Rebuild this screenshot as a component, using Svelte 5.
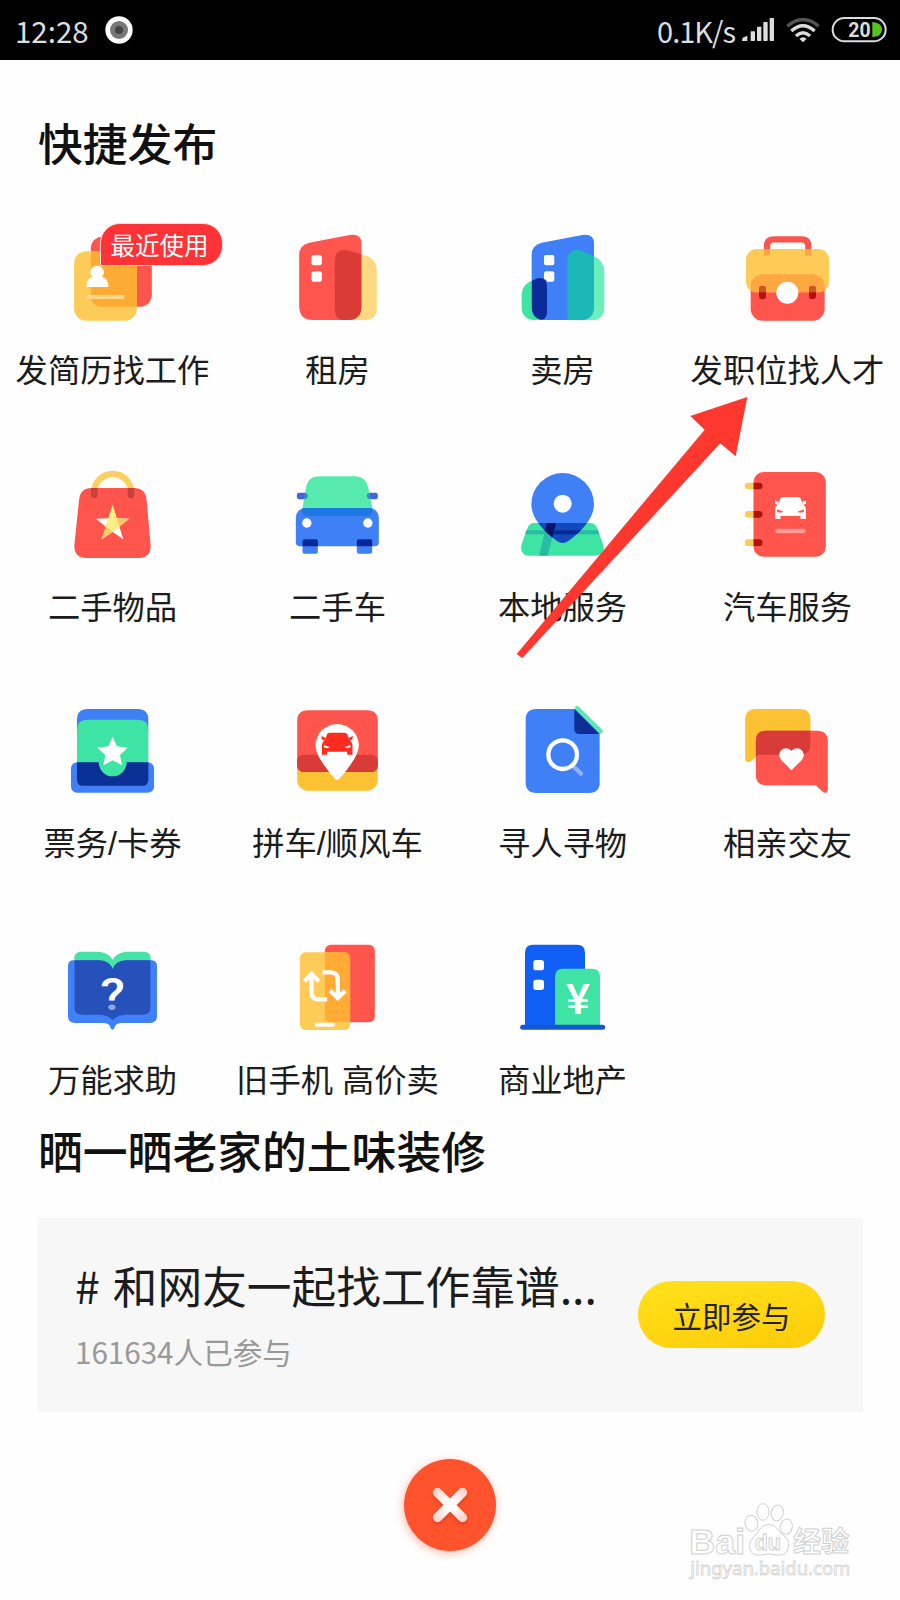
<script>
  // view is the origin of a 300x300 viewBox
  const items = [
    { icon: 'resume', label: '发简历找工作', view: '188.5 45', badge: '最近使用' },
    { icon: 'rent', label: '租房', view: '864.5 45' },
    { icon: 'sell', label: '卖房', view: '189 45' },
    { icon: 'job', label: '发职位找人才', view: '864 45' },
    { icon: 'goods', label: '二手物品', view: '189 35' },
    { icon: 'car', label: '二手车', view: '864.5 35' },
    { icon: 'local', label: '本地服务', view: '189 215' },
    { icon: 'autoService', label: '汽车服务', view: '864.5 215' },
    { icon: 'ticket', label: '票务/卡券', view: '189 25' },
    { icon: 'carpool', label: '拼车/顺风车', view: '864.5 25' },
    { icon: 'search', label: '寻人寻物', view: '189 25' },
    { icon: 'dating', label: '相亲交友', view: '864.5 25' },
    { icon: 'help', label: '万能求助', view: '189 15' },
    { icon: 'phone', label: '旧手机 高价卖', view: '864.5 15' },
    { icon: 'estate', label: '商业地产', view: '189 15' }
  ];

  const rentFront = 'M898 135Q898 105 928 98L1050 75Q1085 70 1085 100V288Q1085 330 1043 330H938Q898 330 898 288Z';
  const rentBack = 'M1005 155Q1005 115 1043 121L1100 137Q1131 148 1131 180V295Q1131 330 1095 330H1035Q1005 330 1005 300Z';
  const sellMain = 'M245 135Q245 105 275 98L397 75Q432 70 432 100V288Q432 330 390 330H285Q245 330 245 288Z';
  const sellRight = 'M352 155Q352 115 390 121L430 137Q463 152 463 185V290Q463 330 425 330H362Q352 330 352 315Z';
  const sellLeft = 'M215 255Q216 230 236 217L262 205Q291 200 291 230V310Q288 328 275 330H255Q215 329 215 290Z';
  const pin = 'M244 342A94 94 0 0 1 432 342Q432 395 355 452Q338 464 321 452Q244 395 244 342Z';
  const chatBack = 'M886 90Q886 58 918 58H1050Q1082 58 1082 90V165Q1082 195 1050 195H925L905 214Q888 222 886 208Z';
  const chatFront = 'M918 155Q918 123 950 123H1102Q1134 123 1134 155V300Q1132 313 1120 308L1098 287H950Q918 287 918 255Z';
  const bookBack = 'M243 65H300Q330 70 338 90Q346 70 376 65H432Q452 65 452 85V232Q452 254 430 254H375Q350 256 338 270Q326 256 300 254H245Q223 254 223 232V85Q223 65 243 65Z';
  const bookFront = 'M204 108Q204 91 221 91H298Q330 93 338 118Q346 93 378 91H453Q471 91 471 108V258Q471 279 450 279H362Q347 280 344 292Q342 299 338 299Q333 299 331 292Q328 280 313 279H225Q204 279 204 258Z';
</script>

{#snippet miniCar(x, y, color, lamp)}
  <g transform="translate({x} {y})" fill={color}>
    <path d="M-30 4Q-27 0 -20 0H20Q27 0 30 4L37 22Q46 28 46 38V66H30V57H-30V66H-46V38Q-46 28 -37 22Z" />
    <path d="M-47 10L-35 15L-38 24L-46 20ZM47 10L35 15L38 24L46 20Z" />
    <path fill={lamp} d="M-40 37L-21 44Q-30 49 -40 44ZM40 37L21 44Q30 49 40 44Z" />
  </g>
{/snippet}

{#snippet art(name)}
  {#if name === 'resume'}
    <rect x="272" y="80" width="183" height="210" rx="35" fill="#ff554f" />
    <rect x="222" y="124" width="188" height="208" rx="36" fill="#fdcb58" />
    <path fill="#feab33" d="M272 124H374Q410 124 410 160V290H307Q272 290 272 255Z" />
    <circle cx="291" cy="187" r="20" fill="#fff" />
    <path fill="#fff" d="M259 231Q260 200 280 200H303Q323 200 325 231Z" />
    <path stroke="#ffd78a" stroke-width="12" stroke-linecap="round" d="M265 261H368" />
  {:else if name === 'rent'}
    <clipPath id="rent-clip"><path d={rentFront} /></clipPath>
    <path fill="#ffd97f" d={rentBack} />
    <path fill="#ff554f" d={rentFront} />
    <path fill="#d93c36" d={rentBack} clip-path="url(#rent-clip)" />
    <rect x="935" y="135" width="31" height="31" rx="6" fill="#fff" />
    <rect x="935" y="184" width="31" height="31" rx="6" fill="#fff" />
  {:else if name === 'sell'}
    <clipPath id="sell-clip"><path d={sellMain} /></clipPath>
    <path fill="#6ceebc" d={sellRight} />
    <path fill="#3ee4a4" d={sellLeft} />
    <path fill="#3f80f8" d={sellMain} />
    <g clip-path="url(#sell-clip)">
      <path fill="#1cb8b8" d={sellRight} />
      <path fill="#0a2c98" d={sellLeft} />
    </g>
    <rect x="282" y="135" width="31" height="31" rx="6" fill="#fff" />
    <path fill="#fff" d="M288 184H307Q313 184 313 190V209Q313 215 307 215H291Q290 209 282 206V190Q282 184 288 184Z" />
  {:else if name === 'job'}
    <clipPath id="job-clip"><rect x="888" y="117" width="249" height="130" rx="32" /></clipPath>
    <path fill="none" stroke="#f9554f" stroke-width="19" d="M951 136V108Q951 88 972 88H1054Q1075 88 1075 108V136" />
    <rect x="902" y="193" width="222" height="139" rx="36" fill="#ff554d" />
    <rect x="888" y="117" width="249" height="130" rx="32" fill="#fecb58" />
    <rect x="902" y="193" width="222" height="139" rx="36" fill="#ffa740" clip-path="url(#job-clip)" />
    <path stroke="#fba747" stroke-width="19" d="M951 117V137M1075 117V137" />
    <rect x="927" y="228" width="21" height="40" rx="10" fill="#b81010" />
    <rect x="1077" y="228" width="21" height="40" rx="10" fill="#b81010" />
    <path fill="#c95a25" d="M927 247V238A10 10 0 0 1 948 238V247ZM1077 247V238A10 10 0 0 1 1098 238V247Z" />
    <circle cx="1012" cy="248" r="33" fill="#fff" />
  {:else if name === 'goods'}
    <path fill="none" stroke="#fbcf60" stroke-width="19" d="M283 130V124A55 53 0 0 1 393 124V130" />
    <path fill="#ff554d" d="M237 150Q240 113 275 113H402Q437 113 440 150L452 285Q453 323 415 323H260Q222 323 223 285Z" />
    <path fill="#c9403d" d="M273 113H293V134A10 10 0 0 1 273 134ZM383 113H403V134A10 10 0 0 1 383 134Z" />
    <path fill="#fff" d="M338 165L350 204L387 205L358 229L370 267L338 245L305 267L317 229L288 205L326 204Z" />
    <path fill="#ffc760" d="M338 165L350 204L387 205L358 229L305 267L317 229Z" />
    <path fill="#ffee85" d="M338 165L358 229L338 243L316 229Z" />
  {:else if name === 'car'}
    <rect x="891" y="127" width="40" height="20" rx="7" fill="#4364da" />
    <rect x="1094" y="127" width="40" height="20" rx="7" fill="#4364da" />
    <path fill="#56eaaf" d="M907 180L918 115Q924 78 957 78H1066Q1098 78 1105 112L1119 180Z" />
    <path fill="#2e8bc6" d="M915 129H919Q924 130 924 137Q923 145 917 146H912ZM1109 129H1106Q1101 130 1101 137Q1102 145 1107 146H1112Z" />
    <path fill="#3f80f7" d="M888 203Q890 173 918 173H1107Q1135 173 1137 203V276Q1137 288 1125 288H900Q888 288 888 276Z" />
    <path fill="#1d78e5" d="M907 175Q912 173 918 173H1107Q1113 173 1118 175V184Q1116 197 1104 197H921Q909 197 907 184Z" />
    <circle cx="921" cy="218" r="14" fill="#fff" />
    <circle cx="1104" cy="218" r="14" fill="#fff" />
    <rect x="908" y="267" width="46" height="43" rx="6" fill="#3f80f7" />
    <rect x="1071" y="267" width="46" height="43" rx="6" fill="#3f80f7" />
    <path fill="#06289a" d="M908 288V272Q909 267 914 267H948Q954 267 954 272V288ZM1071 288V272Q1072 267 1077 267H1111Q1117 267 1117 272V288Z" />
  {:else if name === 'local'}
    <clipPath id="map-clip"><path d={pin} /></clipPath>
    <path fill="#3f80f7" d={pin} />
    <path fill="#3ee4a4" d="M250 398H422Q436 400 441 412L460 465Q466 495 435 496H240Q207 495 215 460L232 415Q236 400 250 398Z" />
    <path fill="#29bba4" d="M229 420H444L449 432H225ZM291 398H318L293 496H267Z" />
    <g clip-path="url(#map-clip)">
      <rect x="230" y="398" width="220" height="70" fill="#1249bd" />
      <path fill="#062a94" d="M230 420H445V432H230Z" />
      <path fill="#031366" d="M291 398H318L301 465H274Z" />
    </g>
    <circle cx="338" cy="340" r="27" fill="#fff" />
  {:else if name === 'autoService'}
    <rect x="911" y="245" width="217" height="254" rx="30" fill="#ff554d" />
    {#each [287, 372, 457] as y}
      <path fill="#fbcb5c" d="M911 {y - 10}H895A10 10 0 0 0 895 {y + 10}H911Z" />
      <path fill="#b01208" d="M911 {y - 10}H928A10 10 0 0 1 928 {y + 10}H911Z" />
    {/each}
    {@render miniCar(1022, 320, '#fff', '#ff554d')}
    <path stroke="#ff9b96" stroke-width="14" stroke-linecap="round" d="M983 422H1061" />
  {:else if name === 'ticket'}
    <path fill="#3f80f7" d="M231 90Q231 58 263 58H413Q445 58 445 90V125H231Z" />
    <rect x="213" y="218" width="249" height="91" rx="18" fill="#3f80f7" />
    <path fill="#3ee4a4" d="M231 120Q231 90 261 90H415Q445 90 445 120V218H231Z" />
    <path fill="#0a3095" d="M231 218H445V270Q445 288 427 288H249Q231 288 231 270Z" />
    <path fill="#3ee4a4" d="M296 217A42 43 0 0 0 380 217Z" />
    <path fill="#fff" d="M338 141L351 170L383 174L360 196L366 227L338 212L310 227L316 196L292 174L325 170Z" />
  {:else if name === 'carpool'}
    <rect x="892" y="195" width="242" height="108" rx="32" fill="#fdc233" />
    <path fill="#ff554d" d="M892 94Q892 62 924 62H1102Q1134 62 1134 94V225Q1134 247 1112 247H914Q892 247 892 225Z" />
    <path fill="#d93c38" d="M892 215Q892 195 912 195H1114Q1134 195 1134 215V225Q1134 247 1112 247H914Q892 247 892 225Z" />
    <path fill="#fff" d="M947 168A65 65 0 0 1 1077 168Q1077 200 1020 266Q1012 275 1004 266Q947 200 947 168Z" />
    {@render miniCar(1012, 129, '#fd2b20', '#fff')}
  {:else if name === 'search'}
    <path fill="#3f80f7" d="M259 58H378L449 128V278Q449 310 417 310H259Q227 310 227 278V90Q227 58 259 58Z" />
    <path fill="#0c2f96" d="M373 58L448 133H388Q373 133 373 118Z" />
    <path stroke="#5ee6ae" stroke-width="13" stroke-linecap="round" d="M381 55L452 125" />
    <path stroke="#8cb2fb" stroke-width="13" stroke-linecap="round" d="M374 234L393 252" />
    <circle cx="338" cy="195" r="43" fill="none" stroke="#fff" stroke-width="13" />
  {:else if name === 'dating'}
    <clipPath id="chat-clip"><path d={chatBack} /></clipPath>
    <path fill="#fdc233" d={chatBack} />
    <path fill="#ff554d" d={chatFront} />
    <path fill="#d93c38" d={chatFront} clip-path="url(#chat-clip)" />
    <path fill="#fff" d="M1025 242L994 211Q982 195 994 182Q1009 169 1025 183Q1042 169 1056 182Q1068 195 1056 211Z" />
  {:else if name === 'help'}
    <clipPath id="book-clip"><path d={bookBack} /></clipPath>
    <path fill="#46e3a6" d={bookBack} />
    <path fill="#4080f8" d={bookFront} />
    <path fill="#2651ba" d={bookFront} clip-path="url(#book-clip)" />
    <text class="sign" x="301" y="240" font-size="134" textLength="74" lengthAdjust="spacingAndGlyphs">?</text>
    <circle cx="338" cy="233" r="13" fill="#2651ba" opacity="0.5" />
  {:else if name === 'phone'}
    <rect x="975" y="44" width="150" height="233" rx="18" fill="#ff554d" />
    <rect x="900" y="67" width="151" height="233" rx="18" fill="#fdcb58" />
    <path fill="#ffab36" d="M975 67H1033Q1051 67 1051 85V277H993Q975 277 975 259Z" />
    <path stroke="#fff" stroke-width="12" stroke-linecap="round" d="M951 284H999" />
    <path fill="none" stroke="#fff" stroke-width="13" d="M935 133V188Q937 208 956 208H982M914 154L935 132L957 154M968 127H994Q1014 129 1014 149V202M991 182L1014 204L1036 182" />
  {:else if name === 'estate'}
    <path fill="#1060f6" d="M225 68Q225 44 249 44H381Q405 44 405 68V290H225Z" />
    <rect x="250" y="90" width="32" height="31" rx="8" fill="#fff" />
    <rect x="250" y="149" width="32" height="31" rx="8" fill="#fff" />
    <path fill="#3fe3a4" d="M315 140Q315 116 339 116H426Q450 116 450 140V287H315Z" />
    <path stroke="#1557d0" stroke-width="15" stroke-linecap="round" d="M218 292H458" />
    <text class="sign" x="348" y="252" font-size="130" textLength="72" lengthAdjust="spacingAndGlyphs">¥</text>
  {/if}
{/snippet}

<div class="screen">
  <header class="status">
    <span class="time">12:28</span>
    <svg class="record" viewBox="0 0 84 84">
      <circle cx="42" cy="42" r="41" fill="#fff" />
      <circle cx="42" cy="42" r="27" fill="#777" />
      <circle cx="42" cy="42" r="12" fill="#444" />
    </svg>
    <span class="speed">0.1K/s</span>
    <svg class="signals" viewBox="870 0 450 180">
      <g fill="#ddd">
        <path d="M876 123L878 113L892 107V123Z" />
        <rect x="902" y="94" width="13" height="29" rx="2" />
        <rect x="921" y="80" width="13" height="43" rx="2" />
        <rect x="940" y="66" width="13" height="57" rx="2" />
        <rect x="959" y="54" width="13" height="69" rx="2" />
        <path d="M1048 116Q1059 107 1070 116L1059 127Z" />
      </g>
      <g fill="none" stroke-width="10">
        <path stroke="#555" d="M1012 79Q1059 38 1106 79" />
        <path stroke="#ddd" d="M1024 93Q1059 62 1094 93" />
        <path stroke="#ddd" d="M1038 108Q1059 89 1080 108" />
      </g>
      <rect x="1148" y="54" width="159" height="70" rx="35" fill="none" stroke="#ddd" stroke-width="6" />
      <path fill="#55c51a" d="M1267 66H1270Q1296 70 1296 89Q1296 107 1270 111H1267Z" />
      <text class="power" x="1195" y="111" textLength="67" lengthAdjust="spacingAndGlyphs">20</text>
    </svg>
  </header>

  <h2 class="first">快捷发布</h2>

  <div class="grid">
    {#each items as item}
      <div class="item">
        <svg class="icon" viewBox="{item.view} 300 300">
          {@render art(item.icon)}
        </svg>
        {#if item.badge}
          <span class="badge">{item.badge}</span>
        {/if}
        <span class="label">{item.label}</span>
      </div>
    {/each}
  </div>

  <h2 class="second">晒一晒老家的土味装修</h2>

  <section class="topic">
    <div class="topic-text">
      <div class="topic-title"># 和网友一起找工作靠谱...</div>
      <div class="topic-count">161634人已参与</div>
    </div>
    <button type="button" class="join">立即参与</button>
  </section>

  <button type="button" class="close" aria-label="关闭">
    <svg viewBox="0 0 92 92">
      <defs>
        <radialGradient id="cross" gradientUnits="userSpaceOnUse" cx="46" cy="46" r="23">
          <stop offset="0.2" stop-color="#fff" />
          <stop offset="1" stop-color="#ffc9c0" />
        </radialGradient>
      </defs>
      <path stroke="url(#cross)" stroke-width="9.5" stroke-linecap="round" d="M33.5 33.5L58.5 58.5M58.5 33.5L33.5 58.5" />
    </svg>
  </button>

  <!-- pointer to the job posting entry -->
  <svg class="pointer" viewBox="0 0 1350 840">
    <path fill="#fe372f" d="M892 21L721 78L764 119L200 792L217 804L811 160L857 199Z" />
  </svg>

  <svg class="watermark" viewBox="920 180 500 250">
    <g fill="#fff" stroke="#d0d0d0" stroke-width="3">
      <text class="brand" x="927" y="342" font-size="108" textLength="168" lengthAdjust="spacingAndGlyphs">Bai</text>
      <ellipse cx="1114" cy="250" rx="19" ry="24" transform="rotate(-10 1114 250)" />
      <ellipse cx="1149" cy="216" rx="18" ry="25" />
      <ellipse cx="1192" cy="219" rx="18" ry="24" transform="rotate(12 1192 219)" />
      <ellipse cx="1219" cy="260" rx="18" ry="23" transform="rotate(10 1219 260)" />
      <path d="M1166 253Q1184 253 1196 271Q1202 280 1214 289Q1228 301 1226 320Q1222 347 1195 346Q1166 339 1138 346Q1110 347 1108 320Q1106 304 1122 290Q1132 281 1137 271Q1149 253 1166 253Z" />
      <text class="brand" x="1124" y="331" font-size="66" textLength="78" lengthAdjust="spacingAndGlyphs">du</text>
      <text class="brand-cn" x="1240" y="336" font-size="84" textLength="168">经验</text>
    </g>
    <text class="site" x="930" y="406" textLength="482" lengthAdjust="spacingAndGlyphs">jingyan.baidu.com</text>
  </svg>
</div>

<style>
  :global(body) {
    background: #fefefe;
  }

  .screen {
    position: relative;
    width: 900px;
    height: 1600px;
    overflow: hidden;
    background: #fefefe;
    color: #1c1c1c;
    font-family: "Noto Sans CJK SC", sans-serif;
  }

  .status {
    display: flex;
    align-items: center;
    height: 60px;
    padding: 0 10px 0 15px;
    background: #000;
    color: #ddd;
    font-size: 29.5px;
    line-height: 60px;
  }

  .record {
    width: 28px;
    height: 28px;
    margin-left: 16px;
  }

  .speed {
    margin-left: auto;
    margin-right: 5px;
    font-size: 29px;
    letter-spacing: -1px;
  }

  .signals {
    width: 150px;
    height: 60px;
  }

  .power {
    fill: #ddd;
    font: bold 62px Roboto, sans-serif;
  }

  h2 {
    margin: 0 38px;
    color: #111;
    font-size: 44.8px;
    font-weight: 500;
    line-height: 66px;
  }

  .first {
    padding-top: 49px;
  }

  .grid {
    display: grid;
    grid-template-columns: repeat(4, 225px);
    grid-auto-rows: 236.67px;
    height: 873.3px;
    margin-top: 45px;
    padding-top: 5px;
    box-sizing: border-box;
  }

  .item {
    position: relative;
    display: flex;
    flex-direction: column;
    align-items: center;
  }

  .icon {
    width: 100px;
    height: 100px;
    overflow: visible;
  }

  .sign {
    fill: #fff;
    font-family: Roboto, sans-serif;
    font-weight: 500;
  }

  .badge {
    position: absolute;
    left: 100px;
    top: -2px;
    width: 123px;
    height: 43px;
    box-sizing: border-box;
    border: 1px solid #ffd9d5;
    border-radius: 20px 20px 20px 0;
    background: #fe3338;
    color: #fff;
    font-size: 24.5px;
    line-height: 41px;
    text-indent: -4px;
    text-align: center;
  }

  .label {
    margin-top: 21px;
    font-family: "Liberation Sans", "Noto Sans CJK SC", sans-serif;
    font-size: 32.3px;
    line-height: 50px;
    white-space: nowrap;
  }

  .second {
    margin-top: 24px;
  }

  .topic {
    display: flex;
    align-items: center;
    justify-content: space-between;
    height: 193.4px;
    margin: 35px 37.5px 0;
    padding: 0 37.5px;
    box-sizing: border-box;
    background: #f7f7f7;
  }

  .topic-text {
    padding-top: 4px;
  }

  .topic-title {
    font-size: 44.7px;
    line-height: 68px;
    word-spacing: 3px;
    white-space: nowrap;
  }

  .topic-count {
    margin-top: 3px;
    color: #999;
    font-size: 29.6px;
    line-height: 60px;
  }

  .join {
    width: 187px;
    height: 67px;
    padding: 0;
    border: none;
    border-radius: 34px;
    background: linear-gradient(170deg, #ffe21c, #fdcb08);
    color: #222;
    font-family: inherit;
    font-size: 29.5px;
    line-height: 62px;
  }

  .close {
    display: block;
    width: 92px;
    height: 92px;
    margin: 47px auto 0;
    padding: 0;
    border: none;
    border-radius: 50%;
    background: #fe532d;
    box-shadow: -1px 2px 8px rgba(254, 83, 45, 0.4);
  }

  .close svg {
    display: block;
    filter: drop-shadow(0 2px 2px rgba(190, 40, 10, 0.45));
  }

  .pointer {
    position: absolute;
    left: 450px;
    top: 390px;
    width: 450px;
    height: 280px;
  }

  .watermark {
    position: absolute;
    left: 687px;
    top: 1500px;
    width: 166px;
    height: 83px;
  }

  .brand {
    font-family: "Liberation Sans", sans-serif;
    font-weight: bold;
  }

  .brand-cn {
    font-family: "Noto Sans CJK SC", sans-serif;
    font-weight: bold;
  }

  .site {
    fill: #fff;
    stroke: #d4d4d4;
    stroke-width: 2.5px;
    font: 56px "Noto Sans", sans-serif;
  }
</style>
